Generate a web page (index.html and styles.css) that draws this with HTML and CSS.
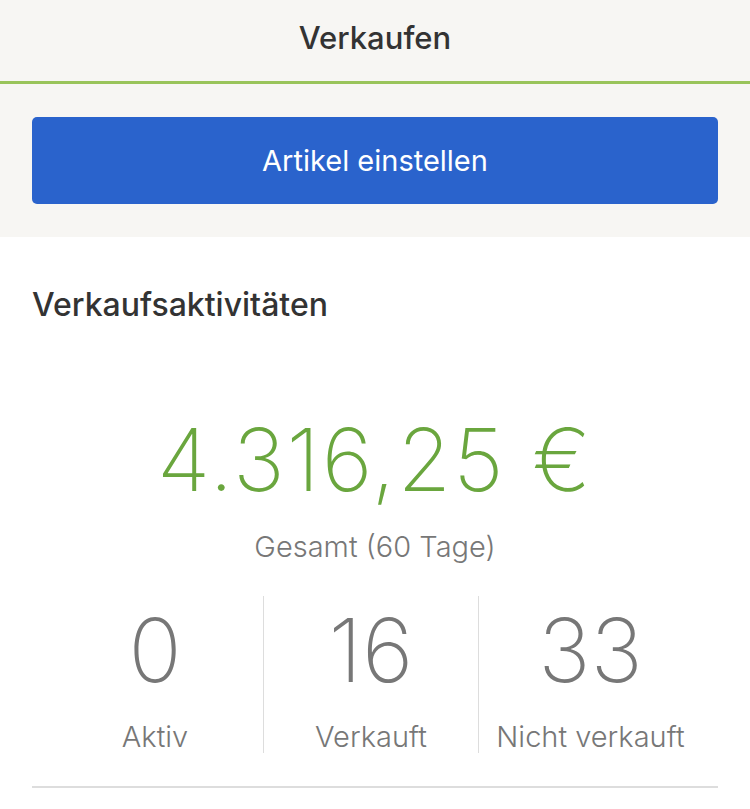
FILE: index.html
```html
<!DOCTYPE html>
<html lang="de">
<head>
    <meta charset="UTF-8">
    <meta name="viewport" content="width=device-width, initial-scale=1.0">
    <title>Verkaufen</title>
    <link rel="stylesheet" href="styles.css">
</head>
<body>
    <header class="topbar">
        <h1>Verkaufen</h1>
    </header>

    <div class="action">
        <button type="button" class="btn-primary">Artikel einstellen</button>
    </div>

    <section class="activity">
        <h2>Verkaufsaktivitäten</h2>

        <div class="total">
            <div class="total-amount">4.316,25 €</div>
            <div class="total-label">Gesamt (60 Tage)</div>
        </div>

        <div class="stats">
            <div class="stat stat-first">
                <div class="stat-value">0</div>
                <div class="stat-label">Aktiv</div>
            </div>
            <div class="stat">
                <div class="stat-value">16</div>
                <div class="stat-label">Verkauft</div>
            </div>
            <div class="stat stat-last">
                <div class="stat-value">33</div>
                <div class="stat-label">Nicht verkauft</div>
            </div>
        </div>

        <hr class="rule">
    </section>
</body>
</html>
```

FILE: styles.css
```css
:root {
    --header-bg: #f7f6f3;
    --accent-green: #99c45a;
    --amount-green: #6aa63e;
    --primary-blue: #2a63cc;
    --text-dark: #333333;
    --text-grey: #777777;
    --divider: #dddddd;
}

body {
    margin: 0;
    font-family: 'Inter', 'Liberation Sans', sans-serif;
    background-color: #ffffff;
    color: var(--text-dark);
}

/* --- Top bar --- */

.topbar {
    background-color: var(--header-bg);
    height: 81px;
    border-bottom: 3px solid var(--accent-green);
    display: flex;
    align-items: center;
    justify-content: center;
}

.topbar h1 {
    margin: 0;
    font-size: 31px;
    font-weight: 500;
    line-height: 36px;
    margin-top: -6px;
    color: var(--text-dark);
}

.action {
    background-color: var(--header-bg);
    padding: 33px 32px;
}

.btn-primary {
    display: block;
    width: 100%;
    height: 87px;
    border: none;
    border-radius: 5px;
    background-color: var(--primary-blue);
    color: #ffffff;
    font-family: inherit;
    font-size: 29px;
    font-weight: 400;
}

/* --- Sales activity --- */

.activity {
    padding: 50px 32px 0;
}

.activity h2 {
    margin: 0;
    font-size: 32px;
    font-weight: 500;
    line-height: 36px;
    color: var(--text-dark);
}

.total {
    margin-top: 87px;
    text-align: center;
}

.total-amount {
    font-size: 87px;
    font-weight: 200;
    line-height: 100px;
    letter-spacing: 2px;
    color: var(--amount-green);
}

.total-label {
    margin-top: 21px;
    font-size: 29px;
    font-weight: 300;
    line-height: 32px;
    color: var(--text-grey);
}

.stats {
    margin-top: 33px;
    display: grid;
    grid-template-columns: 231px 215px 1fr;
}

.stat {
    text-align: center;
    border-left: 1px solid var(--divider);
}

.stat-first {
    border-left: none;
    padding-left: 15px;
}

.stat-last {
    padding-right: 16px;
}

.stat-value {
    font-size: 88px;
    font-weight: 200;
    line-height: 108px;
    color: var(--text-grey);
}

.stat-label {
    margin-top: 17px;
    font-size: 29px;
    font-weight: 300;
    line-height: 32px;
    color: var(--text-grey);
}

.rule {
    margin: 33px 0 0;
    border: none;
    height: 2px;
    background-color: var(--divider);
}
```
